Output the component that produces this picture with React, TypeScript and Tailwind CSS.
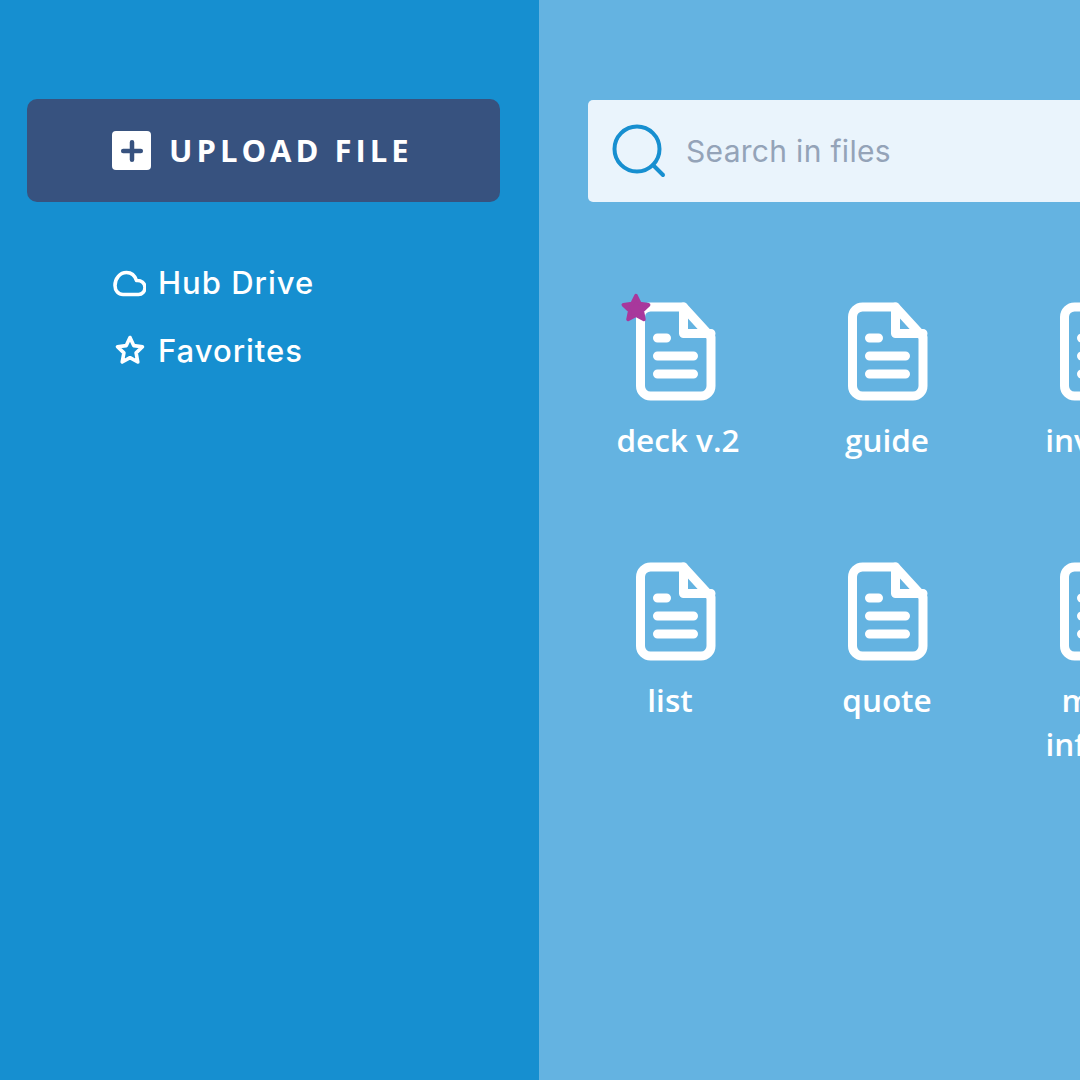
const DocIcon = () => (
  <svg width="82" height="99" viewBox="-1 0 82 99" fill="none" stroke="#ffffff" strokeWidth="9" strokeLinecap="round" strokeLinejoin="round">
    <path d="M15.5 5H48.5L76 35V84A10 10 0 0 1 66 94H15.5A10 10 0 0 1 5.5 84V15A10 10 0 0 1 15.5 5Z" />
    <path d="M48.5 5V31.5H76" />
    <path d="M22.5 36H31.5M22.5 54H58.5M22.5 72H58.5" />
  </svg>
);

const Star = () => (
  <svg width="32" height="32" viewBox="0 0 30 30" className="absolute left-[-14px] top-[-10px]">
    <path d="M15 3.5L18.6 10.9L26.8 12L20.8 17.6L22.4 25.6L15 21.6L7.6 25.6L9.2 17.6L3.2 12L11.4 10.9Z" fill="#a8389c" stroke="#a8389c" strokeWidth="3.5" strokeLinejoin="round" />
  </svg>
);

const files = [
  { label: <>deck v.2</>, star: true, cls: "pl-[6px]" },
  { label: <>guide</>, star: false, cls: "pl-0" },
  { label: <>invoice</>, star: false, cls: "pl-0" },
  { label: <>list</>, star: false, cls: "pr-[10px]" },
  { label: <>quote</>, star: false, cls: "pl-0" },
  { label: <><span className="pl-[6px]">more</span><br />info kit</>, star: false, cls: "pl-0" },
];

export default function App() {
  return (
    <div className="flex h-[1080px] w-[1080px] overflow-hidden bg-[#64b3e1] text-white">
      <aside className="h-full w-[539px] shrink-0 bg-[#168fd0] pl-[27px] pt-[99px]">
        <button className="flex h-[103px] w-[473px] items-center gap-[18px] rounded-[10px] bg-[#37527f] pl-[85px] font-['Open_Sans',sans-serif] text-[31px] font-bold tracking-[4px]">
          <span className="flex h-[39px] w-[39px] items-center justify-center rounded-[4px] bg-white">
            <svg width="24" height="24" viewBox="0 0 24 24" fill="none" stroke="#37527f" strokeWidth="4.5" strokeLinecap="round">
              <path d="M12 3.2V20.8M3.2 12H20.8" />
            </svg>
          </span>
          UPLOAD FILE
        </button>
        <nav className="mt-[59px] flex flex-col gap-[24px] pl-[85px] font-['Inter',sans-serif] text-[31px] font-[450] leading-[44px] tracking-[1px]">
          <div className="flex items-center gap-[12px]">
            <svg width="34" height="27" viewBox="0 0 34 27" fill="none" stroke="#ffffff" strokeWidth="3.6" strokeLinejoin="round">
              <path d="M26.5 24.5H11C6.5 24.5 3 21 3 15.5C3 8.5 8 2.5 14.5 2.5C19.5 2.5 23 6 24.5 10.5C29 10 33 13 33 17.5C33 21.5 30 24.5 26.5 24.5Z" />
            </svg>
            <span>Hub Drive</span>
          </div>
          <div className="flex items-center gap-[12px]">
            <svg width="34" height="32" viewBox="0 0 34 32" fill="none" stroke="#ffffff" strokeWidth="3.6" strokeLinejoin="round">
              <path d="M18 2.5L21.7 10.6L30.5 11.8L24.1 17.9L25.8 27L18 22.7L10.2 27L11.9 17.9L5.5 11.8L14.3 10.6Z" />
            </svg>
            <span>Favorites</span>
          </div>
        </nav>
      </aside>
      <main className="h-full min-w-0 flex-1 pl-[30px] pt-[100px]">
        <div className="ml-[19px] flex h-[102px] w-[700px] items-center gap-[20px] rounded-l-[5px] bg-[#eaf4fc] pl-[24px]">
          <svg width="54" height="54" viewBox="0 0 54 54" fill="none" stroke="#178fd0" strokeWidth="4" strokeLinecap="round">
            <circle cx="25" cy="25" r="22.5" />
            <path d="M41 41L51 51" />
          </svg>
          <span className="font-['Inter',sans-serif] text-[30px] tracking-[0.3px] text-[#94a3b8]">Search in files</span>
        </div>
        <div className="mt-[100px] grid w-[636px] grid-cols-[repeat(3,212px)] auto-rows-[260px]">
          {files.map((f, i) => (
            <div key={i} className="flex flex-col items-center">
              <div className="relative h-[99px] w-[82px]">
                <DocIcon />
                {f.star && <Star />}
              </div>
              <div className={`mt-[17px] w-full whitespace-nowrap text-center font-['Open_Sans',sans-serif] text-[31.5px] font-semibold leading-[44px] ${f.cls}`}>
                {f.label}
              </div>
            </div>
          ))}
        </div>
      </main>
    </div>
  );
}
